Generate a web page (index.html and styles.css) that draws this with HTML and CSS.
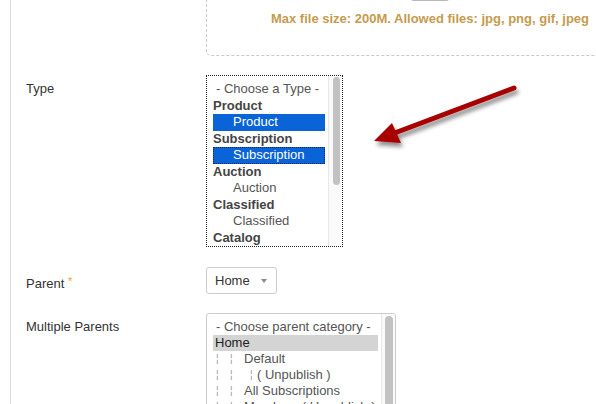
FILE: index.html
```html
<!DOCTYPE html>
<html lang="en">
<head>
<meta charset="UTF-8">
<meta name="viewport" content="width=device-width, initial-scale=1.0">
<title>Category</title>
<link rel="stylesheet" href="styles.css">
</head>
<body>
    <div class="page">
        <div class="row">
            <div class="label"></div>
            <div class="upload">
                <div class="upload-btn"></div>
                <p class="hint">Max file size: 200M. Allowed files: jpg, png, gif, jpeg</p>
            </div>
        </div>

        <div class="row type-row">
            <div class="label">Type</div>
            <div class="listbox type-box">
                <div class="list">
                    <div class="opt ph">- Choose a Type -</div>
                    <div class="grp">Product</div>
                    <div class="opt sel">Product</div>
                    <div class="grp">Subscription</div>
                    <div class="opt sel focus">Subscription</div>
                    <div class="grp">Auction</div>
                    <div class="opt">Auction</div>
                    <div class="grp">Classified</div>
                    <div class="opt">Classified</div>
                    <div class="grp">Catalog</div>
                </div>
                <div class="track"><div class="thumb"></div></div>
            </div>
        </div>

        <div class="row parent-row">
            <div class="label">Parent <span class="req">*</span></div>
            <div class="dropdown">Home <span class="caret"></span></div>
        </div>

        <div class="row multi-row">
            <div class="label">Multiple Parents</div>
            <div class="listbox multi-box">
                <div class="list">
                    <div class="item ph">- Choose parent category -</div>
                    <div class="item home">Home</div>
                    <div class="item"><span class="bar">¦</span><span class="bar">¦</span>Default</div>
                    <div class="item"><span class="bar">¦</span><span class="bar">¦</span><span class="bar small">¦</span>( Unpublish )</div>
                    <div class="item"><span class="bar">¦</span><span class="bar">¦</span>All Subscriptions</div>
                    <div class="item"><span class="bar">¦</span><span class="bar">¦</span>Members ( Unpublish )</div>
                </div>
                <div class="track"><div class="thumb"></div></div>
            </div>
        </div>

        <svg class="arrow" width="596" height="404" viewBox="0 0 596 404">
            <defs>
                <filter id="shade" x="-20%" y="-50%" width="140%" height="200%">
                    <feDropShadow dx="2" dy="4" stdDeviation="2" flood-color="#000" flood-opacity="0.45"/>
                </filter>
            </defs>
            <g filter="url(#shade)">
                <line x1="514" y1="88" x2="392" y2="134" stroke="#a80000" stroke-width="5" stroke-linecap="round"/>
                <polygon points="374,141 392,123 401,143" fill="#a80000"/>
            </g>
        </svg>
    </div>
</body>
</html>
```

FILE: styles.css
```css
body {
    margin: 0;
    height: 404px;
    overflow: hidden;
    background-color: #fff;
    font-family: "Liberation Sans", Arial, sans-serif;
    font-size: 13px;
    color: #333;
}
.page {
    position: relative;
    margin-left: 10px;
    height: 404px;
    border-left: 1px solid #ddd;
    padding-left: 15px;
}
.row {
    display: flex;
    align-items: flex-start;
}
.label {
    width: 180px;
    flex-shrink: 0;
    padding-top: 6px;
    line-height: 16px;
    color: #333;
}
.req {
    color: #f0a030;
    font-size: 11px;
    vertical-align: 3px;
}

/* upload area */
.upload {
    box-sizing: border-box;
    width: 448px;
    height: 87px;
    margin-top: -31px;
    flex-shrink: 0;
    border: 1px dashed #c8c8c8;
    border-radius: 5px;
    text-align: center;
}
.upload-btn {
    box-sizing: border-box;
    width: 42px;
    height: 31px;
    margin: 0 auto;
    border-bottom: 2px solid #b8b8b8;
    border-radius: 0 0 5px 5px;
}
.hint {
    margin: 10px 0 0;
    line-height: 16px;
    font-weight: bold;
    color: #c59b4e;
}

/* list boxes */
.listbox {
    box-sizing: border-box;
    display: flex;
    flex-shrink: 0;
    overflow: hidden;
    background: #fff;
}
.list {
    overflow: hidden;
}
.track {
    box-sizing: border-box;
    width: 14px;
    flex-shrink: 0;
    background: #fafafa;
    border-left: 1px solid #e8e8e8;
}
.thumb {
    background: #c2c2c2;
    border-radius: 4px;
}

.type-row {
    margin-top: 19px;
}
.type-box {
    width: 137px;
    height: 172px;
    border: 1px dotted #222;
}
.type-box .list {
    width: 112px;
    padding: 5px 3px 0 6px;
    line-height: 16.5px;
}
.type-box .track {
    padding: 1px 0 0 4px;
}
.type-box .thumb {
    width: 7px;
    height: 108px;
}
.grp {
    font-weight: bold;
    color: #444;
}
.opt {
    padding-left: 20px;
    color: #555;
    white-space: nowrap;
}
.opt.ph {
    padding-left: 3px;
}
.opt.sel {
    background: #0a64d8;
    color: #fff;
}
.opt.focus {
    box-sizing: border-box;
    outline: 1px dotted #0b2a66;
    outline-offset: -1px;
}

/* parent dropdown */
.parent-row {
    margin-top: 20px;
}
.dropdown {
    box-sizing: border-box;
    display: flex;
    align-items: center;
    width: 71px;
    height: 27px;
    padding-left: 8px;
    border: 1px solid #ccc;
    border-radius: 3px;
    color: #333;
}
.caret {
    margin-left: 11px;
    border-left: 3px solid transparent;
    border-right: 3px solid transparent;
    border-top: 4px solid #8a8a8a;
}

/* multiple parents */
.multi-row {
    margin-top: 19px;
}
.multi-box {
    width: 190px;
    height: 130px;
    border: 1px solid #ccc;
    border-radius: 3px 3px 0 0;
}
.multi-box .list {
    width: 165px;
    padding: 5px 3px 0 6px;
    line-height: 16px;
}
.multi-box .track {
    padding: 2px 0 0 3px;
}
.multi-box .thumb {
    width: 8px;
    height: 160px;
}
.item {
    padding-left: 3px;
    color: #555;
    white-space: nowrap;
}
.item.home {
    padding-left: 2px;
    background: #d4d4d4;
    color: #222;
}
.bar {
    display: inline-block;
    width: 14px;
    font-size: 10px;
    line-height: 10px;
    vertical-align: 1px;
    color: #999;
}
.bar.small {
    width: 7px;
    margin-left: 6px;
}

.arrow {
    position: absolute;
    top: 0;
    left: -11px;
    pointer-events: none;
}
```
